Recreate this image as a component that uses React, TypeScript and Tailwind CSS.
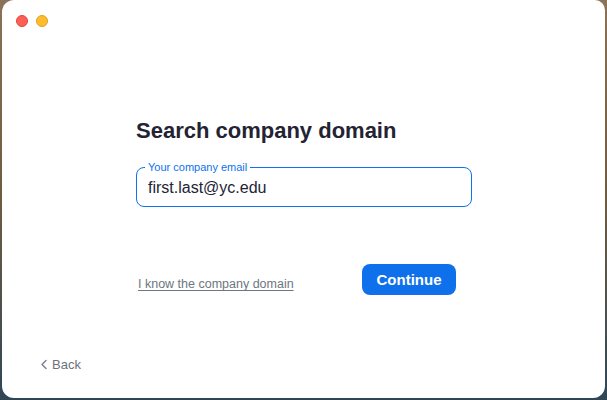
import React from "react";

const App = () => {
  return (
    <div className="w-[607px] h-[400px] bg-gradient-to-b from-[#8a7356] via-[#6f5b40] to-[#2f4656] flex" style={{ fontFamily: '"Liberation Sans", Arial, sans-serif' }}>
      <div className="ml-[2px] w-[603px] h-[398px] bg-white rounded-[12px] rounded-tr-[10px] flex flex-col">
        {/* title bar */}
        <div className="flex items-center gap-[8px] pl-[14px] pt-[15px]">
          <span className="w-[12px] h-[12px] rounded-full bg-[#fe5f57] border border-[#e0443e]" />
          <span className="w-[12px] h-[12px] rounded-full bg-[#febc2e] border border-[#dea123]" />
        </div>

        <div className="ml-[134px] mt-[90px] w-[336px] flex flex-col">
          <h1 className="text-[22px] leading-[28px] font-bold text-[#232333]">Search company domain</h1>

          <div className="relative mt-[22px] h-[40px] border border-[#0e72ed] rounded-[8px] flex items-center px-[11px] pt-[2px]">
            <span className="absolute left-[8px] -top-[8px] px-[3px] bg-white text-[11px] leading-[14px] text-[#0e72ed]">
              Your company email
            </span>
            <span className="text-[16px] text-[#232333]">first.last@yc.edu</span>
          </div>

          <div className="mt-[57px] flex items-center justify-between pr-[16px]">
            <a className="ml-[2px] mt-[10px] text-[12.5px] text-[#6e7680] underline underline-offset-2">
              I know the company domain
            </a>
            <button className="w-[94px] h-[31px] rounded-[8px] bg-[#0e71eb] text-white text-[15px] font-bold pt-[1px]">
              Continue
            </button>
          </div>
        </div>

        <div className="mt-auto mb-[24px] ml-[38px] flex items-center gap-[4px] text-[13px] text-[#6e7080]">
          <svg width="8" height="11" viewBox="0 0 8 11" fill="none">
            <path d="M6 1.5 L2 5.5 L6 9.5" stroke="#7a7c8a" strokeWidth="1.4" strokeLinecap="round" strokeLinejoin="round" />
          </svg>
          <span>Back</span>
        </div>
      </div>
    </div>
  );
};

export default App;
